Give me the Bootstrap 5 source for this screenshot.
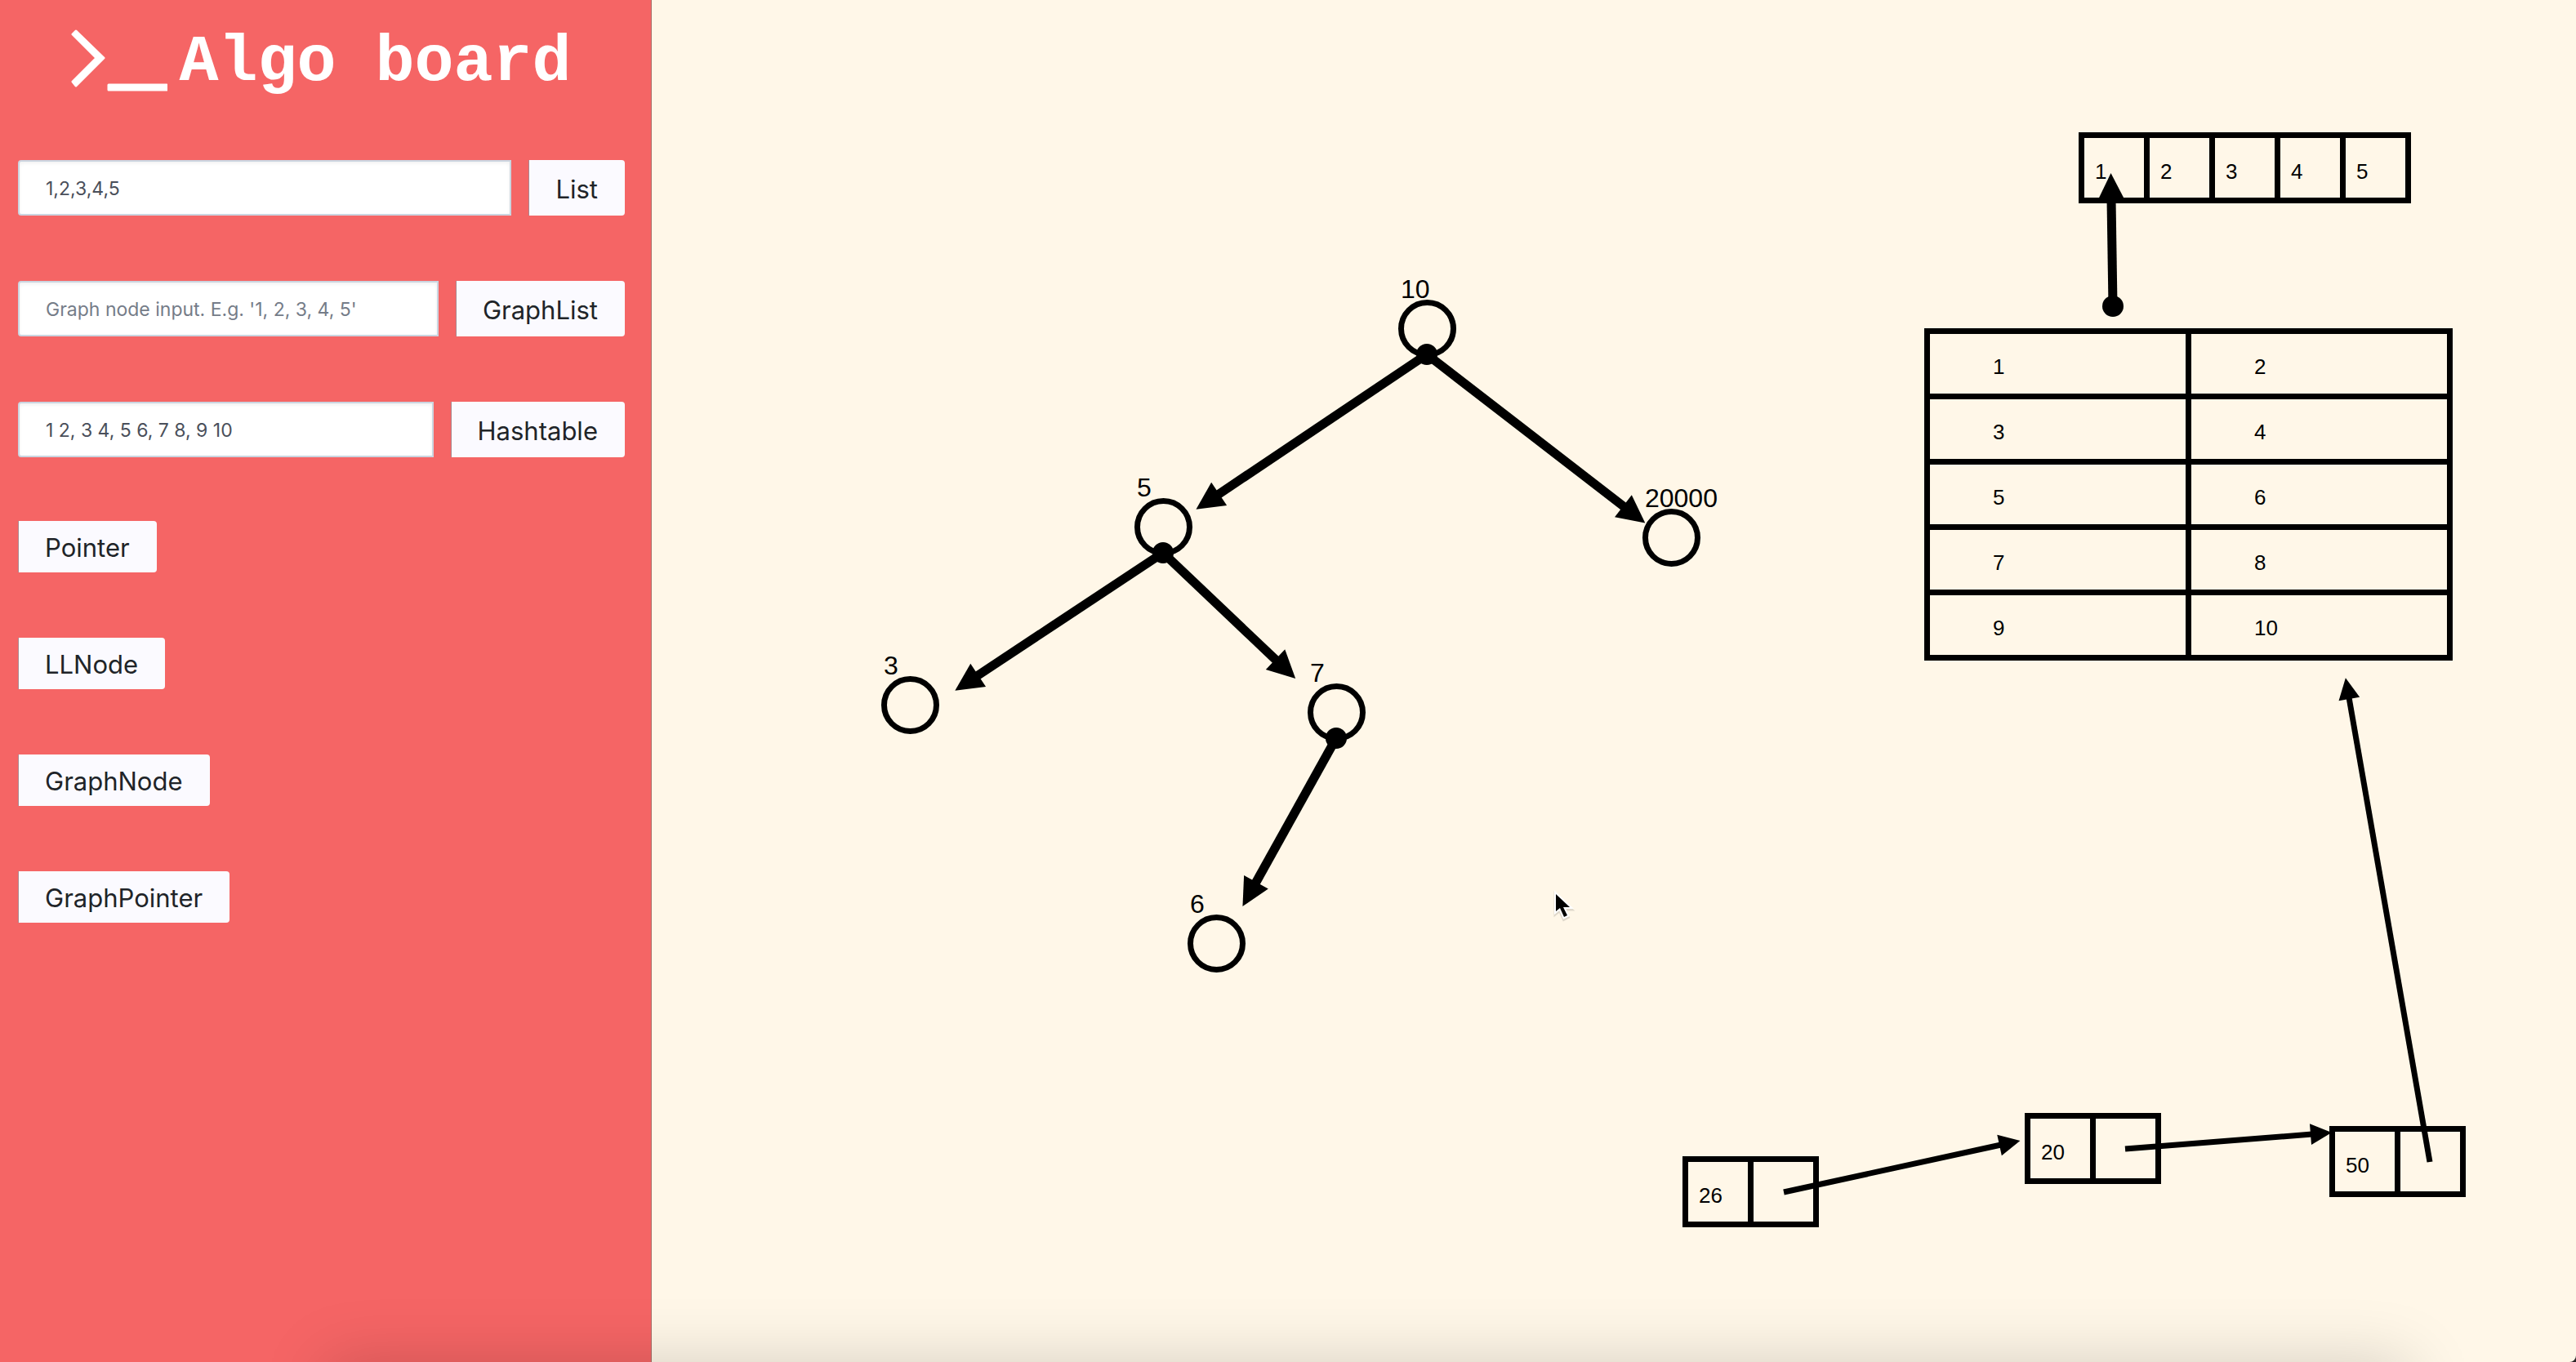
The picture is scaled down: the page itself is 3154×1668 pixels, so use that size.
<!DOCTYPE html>
<html lang="en">
<head>
<meta charset="utf-8">
<meta name="viewport" content="width=device-width, initial-scale=1">
<title>Algo board</title>
<link rel="stylesheet" href="https://cdn.jsdelivr.net/npm/bootstrap@5.3.0/dist/css/bootstrap.min.css">
<style>
  html, body { background: #2a2426; }
  body { font-family: Inter, Roboto, "Liberation Sans", sans-serif; }
  .app-shell { background: #fff7e8; border-bottom-right-radius: 8px; }

  /* side panel */
  .side-panel { width: 25.3%; min-width: 640px; background: #f56565; border-right: 1px solid #a8736c; padding: 35px 32px 40px 22px; }
  .brand { gap: 14px; margin-bottom: 77px; color: #fff; }
  .brand-title { font: bold 80px/84px "Liberation Mono", "Courier New", monospace; white-space: nowrap; }
  .tool-forms { gap: 80px; margin-bottom: 78px; }
  .tool-form { gap: 21px; height: 68px; }
  .tool-form .form-control { min-width: 0; border: 2px solid #cbd5e0; border-radius: 4px 0 0 4px; padding: 2px 32px 0; font-size: 23px; color: #4a4f5a; background: #fff; box-shadow: inset 0 2px 4px rgba(0, 0, 0, .06); }
  .tool-form .form-control::placeholder { color: #757c88; opacity: 1; }
  .tool-btn { --bs-btn-bg: #fbfaff; --bs-btn-color: #202428; --bs-btn-hover-bg: #edebf7; --bs-btn-hover-color: #202428; border: 0; border-left: 1px solid #a98890; border-radius: 0 4px 4px 0; padding: 2px 33px 0 32px; font-size: 31px; line-height: 61px; }
  .tool-list { gap: 80px; }

  /* drawing board */
  .board { min-width: 0; font-family: "Liberation Sans", Arial, sans-serif; color: #000; }
  .shape { position: absolute; }
  .tree-label { font-size: 32px; line-height: 29px; padding-left: 3px; height: 27px; width: 70px; white-space: nowrap; }
  .tree-circle { width: 71px; height: 71px; border: 7px solid #000; border-radius: 50%; }
  .cell { width: 87px; height: 87px; border: 7px solid #000; padding: 8px 0 0 13px; font-size: 26px; line-height: 66px; }
  .cell + .cell { margin-left: -7px; }
  .hash-table { width: 647px; table-layout: fixed; border-collapse: separate; border-spacing: 0; border: solid #000; border-width: 7px 0 0 7px; font-size: 26px; line-height: 65px; }
  .hash-table td { border: solid #000; border-width: 0 7px 7px 0; padding: 8px 0 0 77px; }

  /* where each shape was dropped on the board */
  #n10 { left: 914px; top: 340px; }
  #n5 { left: 591px; top: 583px; }
  #n20000 { left: 1213px; top: 596px; }
  #n3 { left: 281px; top: 801px; }
  #n7 { left: 803px; top: 810px; }
  #n6 { left: 656px; top: 1093px; }
  #list { left: 1747px; top: 162px; }
  #hash { left: 1558px; top: 402px; }
  #ll26 { left: 1262px; top: 1416px; }
  #ll20 { left: 1681px; top: 1363px; }
  #ll50 { left: 2054px; top: 1379px; }
  #pointer { left: 1101px; top: 1088px; }

  .dock-shadow { position: absolute; left: 400px; right: 204px; bottom: -200px; height: 200px; box-shadow: 0 0 80px rgba(0, 0, 0, .17); pointer-events: none; }
</style>
<script defer src="https://cdn.jsdelivr.net/npm/bootstrap@5.3.0/dist/js/bootstrap.bundle.min.js"></script>
</head>
<body>
<div class="app-shell d-flex min-vh-100 position-relative overflow-hidden">
  <aside class="side-panel flex-shrink-0">
    <header class="brand d-flex justify-content-center align-items-start">
      <svg width="118" height="80" viewBox="0 0 118 80" fill="#fff" stroke="#fff" stroke-width="3" stroke-linejoin="round" aria-hidden="true">
        <path d="M6 3 L40 36 L6 70 L2 65 L31 36 L2 7 Z"/>
        <rect x="46" y="69" width="71" height="6"/>
      </svg>
      <h1 class="brand-title mb-0">Algo board</h1>
    </header>

    <div class="tool-forms d-flex flex-column">
      <form class="tool-form d-flex">
        <input class="form-control flex-fill" type="text" aria-label="List values" value="1,2,3,4,5">
        <button class="btn tool-btn" type="button">List</button>
      </form>
      <form class="tool-form d-flex">
        <input class="form-control flex-fill" type="text" aria-label="Graph nodes" placeholder="Graph node input. E.g. '1, 2, 3, 4, 5'">
        <button class="btn tool-btn" type="button">GraphList</button>
      </form>
      <form class="tool-form d-flex">
        <input class="form-control flex-fill" type="text" aria-label="Hashtable pairs" value="1 2, 3 4, 5 6, 7 8, 9 10">
        <button class="btn tool-btn" type="button">Hashtable</button>
      </form>
    </div>

    <div class="tool-list d-flex flex-column align-items-start">
      <button class="btn tool-btn" type="button">Pointer</button>
      <button class="btn tool-btn" type="button">LLNode</button>
      <button class="btn tool-btn" type="button">GraphNode</button>
      <button class="btn tool-btn" type="button">GraphPointer</button>
    </div>
  </aside>

  <main class="board flex-fill position-relative">
    <div class="shape" id="n10"><div class="tree-label">10</div><div class="tree-circle"></div></div>
    <div class="shape" id="n5"><div class="tree-label">5</div><div class="tree-circle"></div></div>
    <div class="shape" id="n20000"><div class="tree-label">20000</div><div class="tree-circle"></div></div>
    <div class="shape" id="n3"><div class="tree-label">3</div><div class="tree-circle"></div></div>
    <div class="shape" id="n7"><div class="tree-label">7</div><div class="tree-circle"></div></div>
    <div class="shape" id="n6"><div class="tree-label">6</div><div class="tree-circle"></div></div>

    <div class="shape d-flex" id="list">
      <div class="cell">1</div><div class="cell">2</div><div class="cell">3</div><div class="cell">4</div><div class="cell">5</div>
    </div>

    <table class="shape hash-table" id="hash">
      <tbody>
        <tr><td>1</td><td>2</td></tr>
        <tr><td>3</td><td>4</td></tr>
        <tr><td>5</td><td>6</td></tr>
        <tr><td>7</td><td>8</td></tr>
        <tr><td>9</td><td>10</td></tr>
      </tbody>
    </table>

    <div class="shape d-flex" id="ll26"><div class="cell">26</div><div class="cell"></div></div>
    <div class="shape d-flex" id="ll20"><div class="cell">20</div><div class="cell"></div></div>
    <div class="shape d-flex" id="ll50"><div class="cell">50</div><div class="cell"></div></div>

    <!-- pointers between the shapes -->
    <svg class="position-absolute top-0 start-0 w-100 h-100" aria-hidden="true">
      <defs>
        <marker id="headBold" markerUnits="userSpaceOnUse" markerWidth="40" markerHeight="40" orient="auto" overflow="visible"><path d="M-2 -17 L32 0 L-2 17 Z" stroke="none"/></marker>
        <marker id="headThin" markerUnits="userSpaceOnUse" markerWidth="30" markerHeight="30" orient="auto" overflow="visible"><path d="M-2 -13 L24 0 L-2 13 Z" stroke="none"/></marker>
      </defs>
      <g stroke="#000" stroke-width="11">
        <path d="M949 434 L693 606" marker-end="url(#headBold)"/>
        <path d="M949 434 L1191 621" marker-end="url(#headBold)"/>
        <path d="M626 677 L398 828" marker-end="url(#headBold)"/>
        <path d="M626 677 L765 809" marker-end="url(#headBold)"/>
        <path d="M838 904 L739 1082" marker-end="url(#headBold)"/>
        <path d="M1789 375 L1787 244" marker-end="url(#headBold)"/>
      </g>
      <g>
        <circle cx="949" cy="434" r="13"/>
        <circle cx="626" cy="677" r="13"/>
        <circle cx="838" cy="904" r="13"/>
        <circle cx="1789" cy="375" r="13"/>
      </g>
      <g stroke="#000" stroke-width="7">
        <path d="M1386 1460 L1652 1402" marker-end="url(#headThin)"/>
        <path d="M1804 1407 L2033 1389" marker-end="url(#headThin)"/>
        <path d="M2177 1423 L2078 854" marker-end="url(#headThin)"/>
      </g>
    </svg>

    <svg class="shape" id="pointer" width="32" height="44" viewBox="-2 0 32 44" aria-hidden="true">
      <path d="M4 9 V30 L9 26 L14 37 L18 35 L13 25 H21 Z" fill="#000" stroke="#000" stroke-width="5" opacity=".12"/>
      <path d="M4 7 V28 L9 24 L14 35 L18 33 L13 23 H21 Z" fill="#000" stroke="#fff" stroke-width="4" paint-order="stroke"/>
    </svg>
  </main>
  <div class="dock-shadow"></div>
</div>
</body>
</html>
